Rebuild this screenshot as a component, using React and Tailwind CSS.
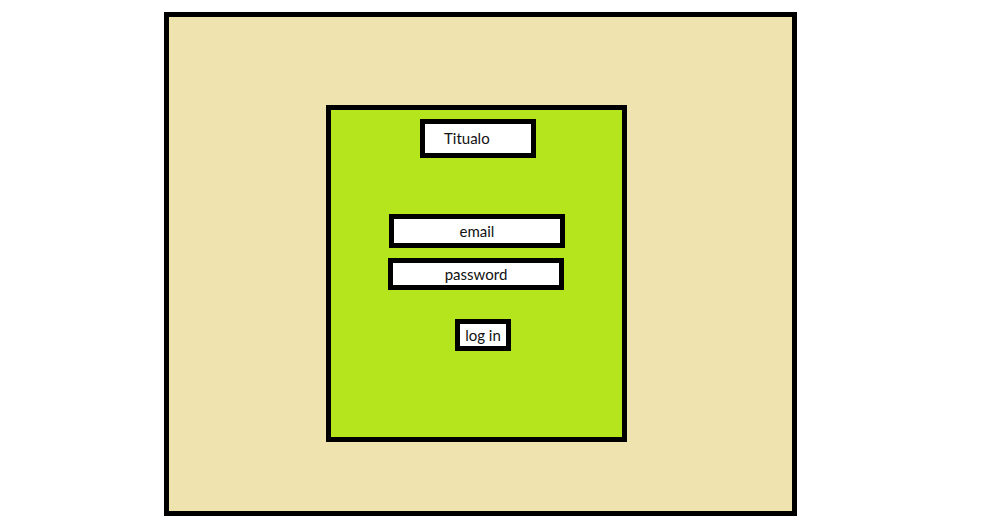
import React from "react";

const font = { fontFamily: "Lato, 'Open Sans', sans-serif" };

function Field({ label, className }) {
  return (
    <div
      className={
        "flex items-center justify-center border-[5px] border-black bg-white text-[15px] text-[#111]" +
        " " +
        className
      }
    >
      {label}
    </div>
  );
}

export default function App() {
  return (
    <div className="min-h-[525px] w-[995px] bg-white pl-[164px] pt-[12px]" style={font}>
      <div className="h-[504px] w-[633px] border-[5px] border-black bg-[#efe4b0] pl-[157px] pt-[88px]">
        <div className="flex h-[337px] w-[301px] flex-col items-start border-[5px] border-black bg-[#b5e61d]">
          <div className="ml-[89px] mt-[9px] flex h-[39px] w-[116px] items-center border-[5px] border-black bg-white pl-[19px] text-[15px] text-[#111]">
            Titualo
          </div>
          <Field label="email" className="ml-[58px] mt-[56px] h-[34px] w-[176px]" />
          <Field label="password" className="ml-[57px] mt-[10px] h-[32px] w-[176px]" />
          <Field label="log in" className="ml-[124px] mt-[29px] h-[32px] w-[56px]" />
        </div>
      </div>
    </div>
  );
}
